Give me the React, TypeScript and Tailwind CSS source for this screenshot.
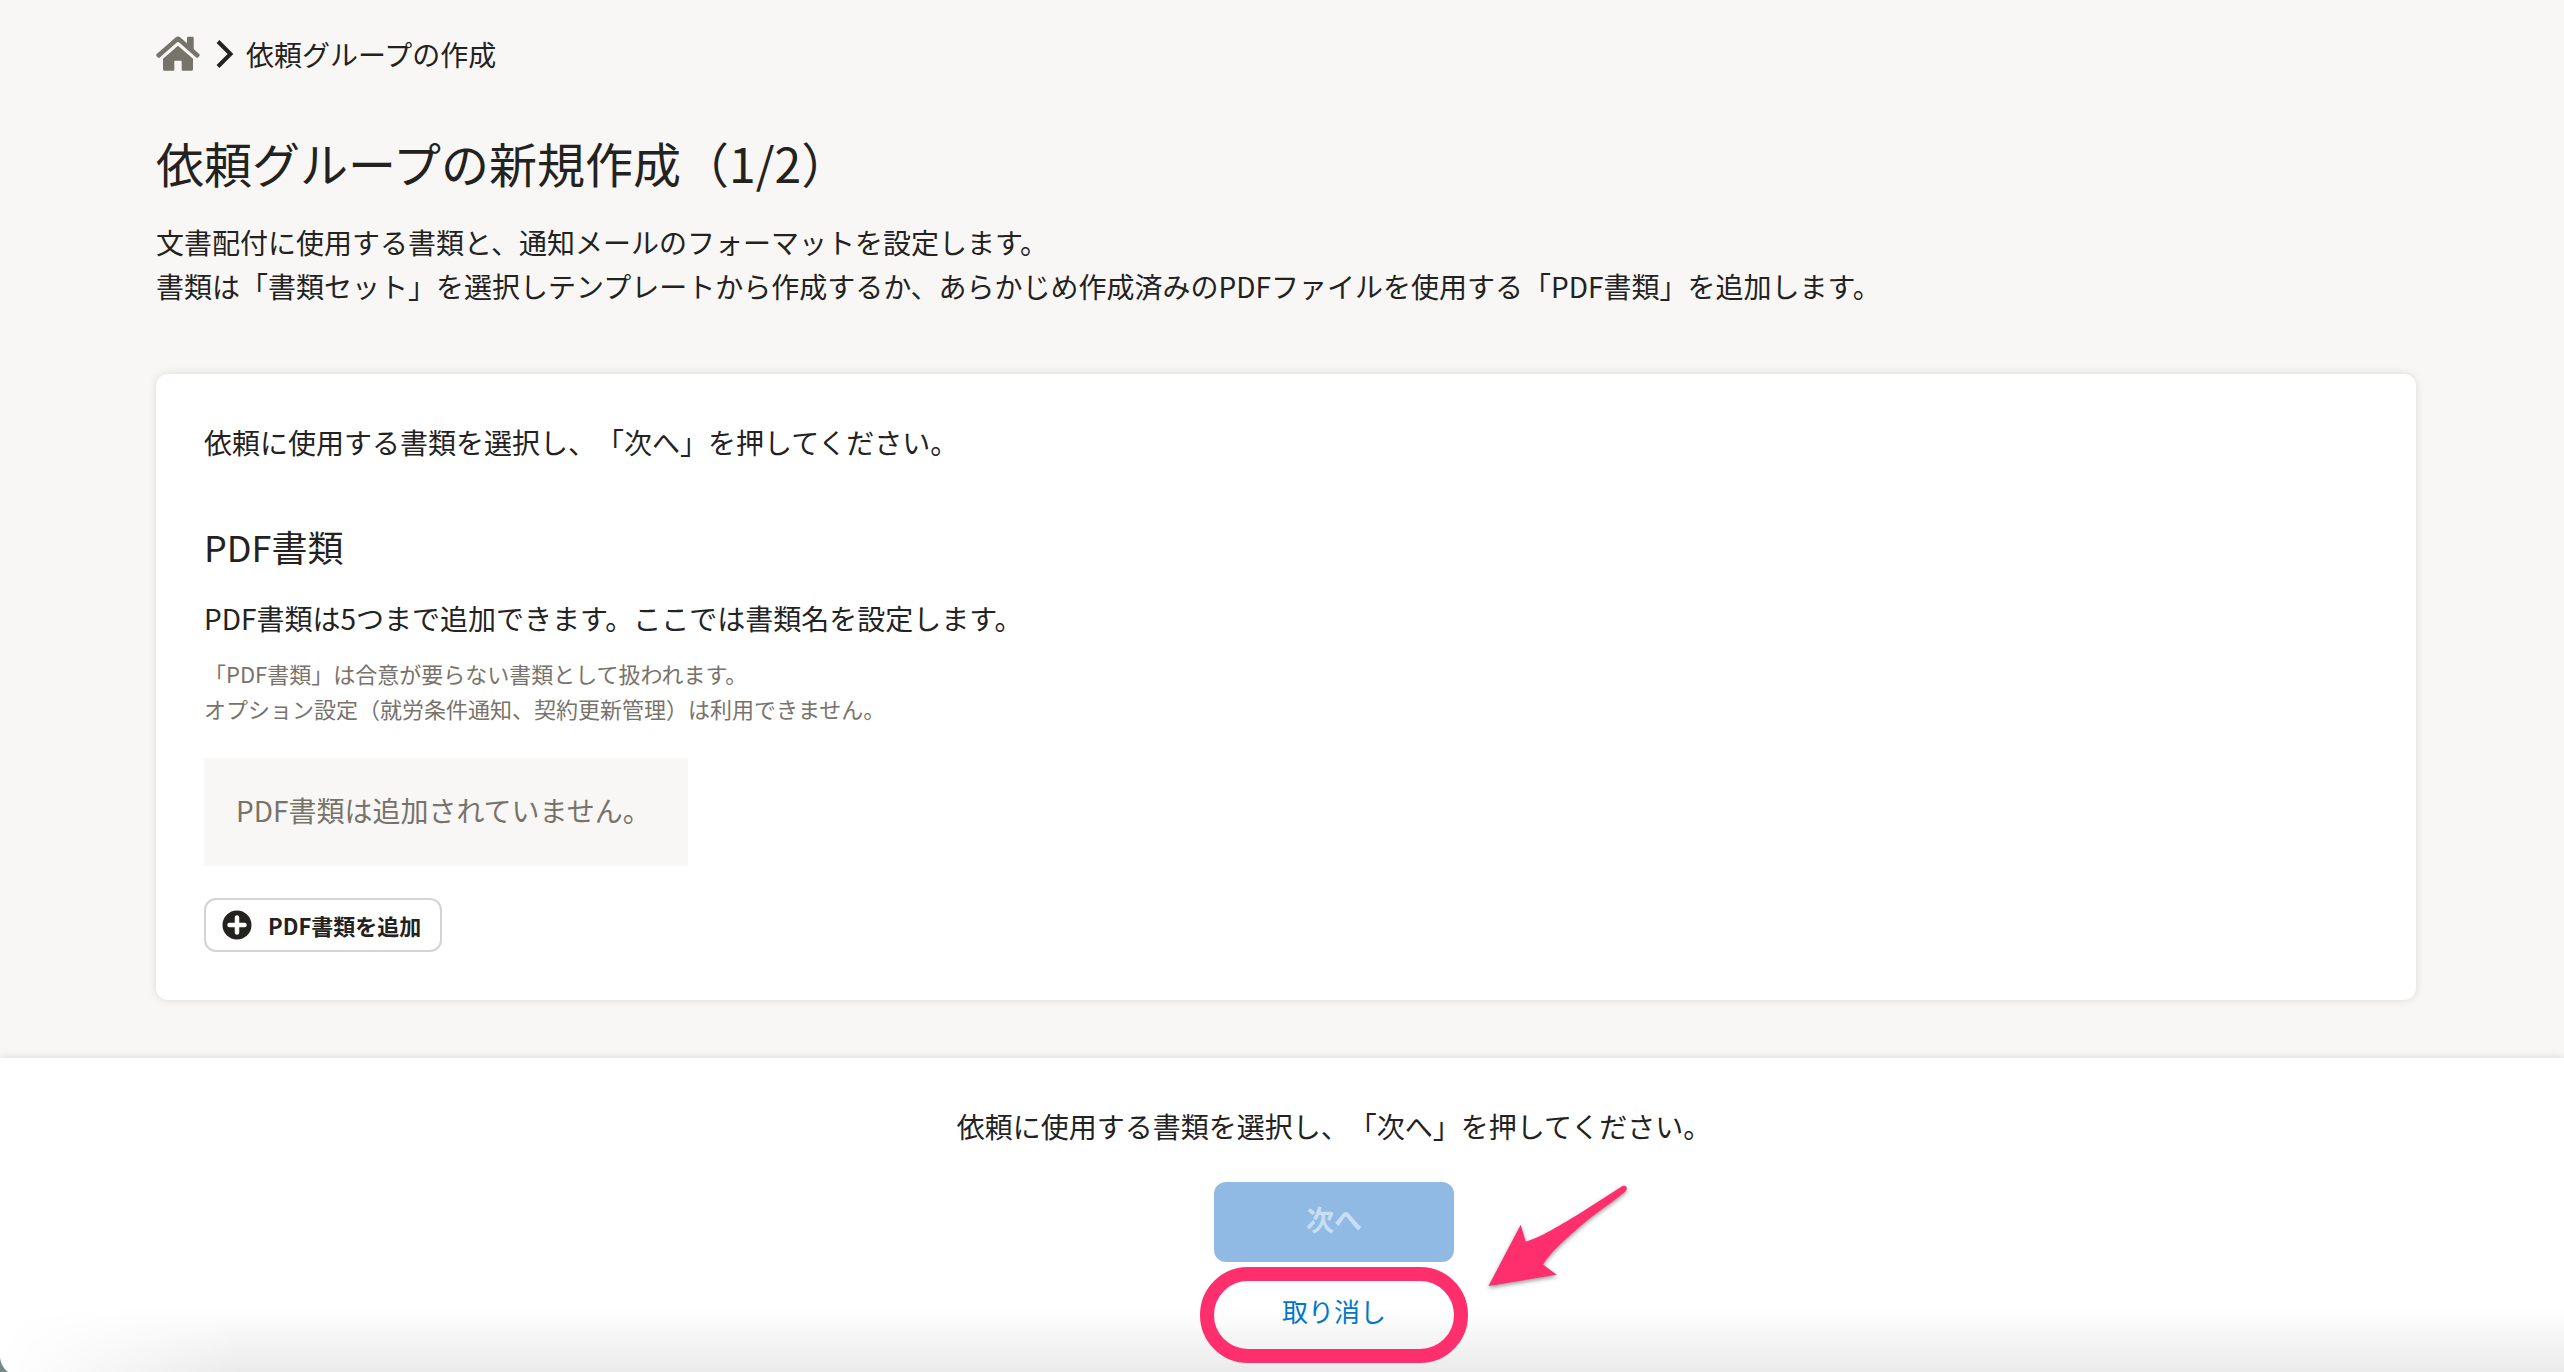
import React from "react";

function HomeIcon() {
  return (
    <svg viewBox="0 0 44 36" className="h-9 w-11 fill-[#78736a]" aria-hidden="true">
      <path d="M19.6 1.6a3.6 3.6 0 0 1 4.8 0L31 7.3V2.2C31 1.3 31.6.8 32.4.8h3.9c.9 0 1.4.5 1.4 1.4v10.9l5.5 4.9c.6.6.7 1.4.2 2l-1.3 1.5c-.5.6-1.3.7-1.9.1L23.2 6.6a1.8 1.8 0 0 0-2.4 0L3.8 21.6c-.6.5-1.4.5-1.9-.1L.5 19.9c-.5-.6-.4-1.4.2-1.9Z" />
      <path d="M22 9.7 37 22.7V33.2c0 .9-.6 1.5-1.5 1.5h-8.9c-.6 0-.9-.4-.9-1V25.7c0-.6-.4-.9-.9-.9h-5.6c-.6 0-.9.4-.9.9v8c0 .6-.4 1-.9 1H8.5c-.9 0-1.5-.6-1.5-1.500V22.700Z" />
    </svg>
  );
}

function Arrow() {
  return (
    <svg
      viewBox="0 0 150 110"
      className="pointer-events-none absolute -top-[101px] left-full ml-[34px] h-[110px] w-[150px] fill-[#ff2f6e] drop-shadow-[0_2px_2px_rgba(0,0,0,0.4)]"
      aria-hidden="true"
    >
      <path d="M.5 106 32.700 44.700 37.700 61.500C48 59.500 68 48 92 33.300L134.500 6C138 4.500 140.500 8 137.500 11.500 122 24 107 33.500 92 46.500 77 59.500 62 73 55 84.500L68.700 94.700Z" />
    </svg>
  );
}

export default function App() {
  return (
    <div className="relative flex min-h-screen flex-col bg-[#f8f7f5] font-['Noto_Sans_CJK_JP',sans-serif] text-[28px] leading-[44px] text-[#23221e] [text-spacing-trim:space-all]">
      <main className="pt-8 pr-[148px] pb-[58px] pl-[156px]">
        <nav aria-label="パンくず" className="flex items-center">
          <a href="#" aria-label="ホーム">
            <HomeIcon />
          </a>
          <svg viewBox="0 0 18 28" className="mr-3 ml-4 h-7 w-[18px]" fill="none" stroke="#23221e" strokeWidth="4" aria-hidden="true">
            <path d="M2 1.500 14.500 14 2 26.500" />
          </svg>
          <span>依頼グループの作成</span>
        </nav>

        <h1 className="mt-[50px] text-[48px] leading-[72px]">依頼グループの新規作成（1/2）</h1>
        <p className="mt-[22px]">
          文書配付に使用する書類と、通知メールのフォーマットを設定します。
          <br />
          書類は「書類セット」を選択しテンプレートから作成するか、あらかじめ作成済みのPDFファイルを使用する「PDF書類」を追加します。
        </p>

        <section className="mt-[66px] rounded-xl bg-white px-12 pt-[46px] pb-12 shadow-[0_0_8px_rgba(0,0,0,0.12)]">
          <p>依頼に使用する書類を選択し、「次へ」を押してください。</p>
          <h2 className="mt-[54px] text-[36px] leading-[56px]">PDF書類</h2>
          <p className="mt-[22px]">PDF書類は5つまで追加できます。ここでは書類名を設定します。</p>
          <p className="mt-4 text-[22px] leading-[35px] text-[#78736a]">
            「PDF書類」は合意が要らない書類として扱われます。
            <br />
            オプション設定（就労条件通知、契約更新管理）は利用できません。
          </p>
          <div className="mt-8 w-[484px] max-w-full bg-[#f8f7f5] px-8 pt-[30px] pb-[34px] text-[#78736a]">
            PDF書類は追加されていません。
          </div>
          <button
            type="button"
            className="mt-8 flex h-[54px] w-[238px] items-center gap-4 rounded-xl border-2 border-[#d6d3d0] bg-white px-4 text-[22px] leading-8 font-bold whitespace-nowrap"
          >
            <svg viewBox="0 0 30 30" className="size-[30px] shrink-0" aria-hidden="true">
              <circle cx="15" cy="15" r="14.500" fill="#23221e" />
              <path d="M15 7.500v15M7.500 15h15" stroke="#fff" strokeWidth="4.500" strokeLinecap="round" />
            </svg>
            PDF書類を追加
          </button>
        </section>
      </main>

      <footer className="relative flex flex-1 flex-col items-center bg-white pt-[46px] pl-[104px] shadow-[0_0_8px_rgba(0,0,0,0.14)]">
        <div className="pointer-events-none absolute inset-x-0 bottom-0 h-16 bg-linear-to-b from-transparent to-black/8 mask-l-from-[calc(100%-240px)]" />
        <p>依頼に使用する書類を選択し、「次へ」を押してください。</p>
        <button type="button" disabled className="mt-[34px] h-20 w-60 rounded-xl bg-[#90bae4] pb-1.5 font-bold text-[#c8def2]">
          次へ
        </button>
        <div className="relative mt-[5px] flex h-24 w-[268px] items-center justify-center rounded-[48px] border-[14px] border-[#ff2f6e]">
          <button type="button" className="pb-2 text-[26px] leading-10 text-[#0077c7]">
            取り消し
          </button>
          <Arrow />
        </div>
      </footer>
      <svg viewBox="0 0 8 16" className="absolute bottom-0 left-0 h-4 w-2 fill-[#6f8a85]" aria-hidden="true">
        <path d="M0 0C0 6 3 12 8 16H0Z" />
      </svg>
    </div>
  );
}
